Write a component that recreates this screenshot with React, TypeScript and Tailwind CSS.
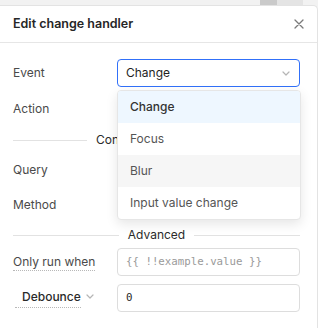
import React from 'react';

const labelCls = 'w-[104px] shrink-0 text-[12px] text-[#4a4a4a]';

const Chevron: React.FC<{ className?: string }> = ({ className }) => (
  <svg width="8" height="5" viewBox="0 0 8 5" className={className} fill="none">
    <path d="M1 1l3 3 3-3" stroke="#b5b5b5" strokeWidth="1.2" strokeLinecap="round" strokeLinejoin="round" />
  </svg>
);

const Divider: React.FC<{ title: string; left?: string }> = ({ title, left }) => (
  <div className="flex items-center h-[18px] gap-[9px]">
    <div className={`h-px bg-[#e2e2e2] ${left ?? 'flex-1'}`} />
    <span className="text-[12px] text-[#2b2b2b] whitespace-nowrap">{title}</span>
    <div className="h-px bg-[#e2e2e2] flex-1" />
  </div>
);

const App: React.FC = () => {
  const options = ['Change', 'Focus', 'Blur', 'Input value change'];

  return (
    <div className="w-[318px] h-[328px] bg-[#f2f2f2] overflow-hidden relative font-['Inter',sans-serif]">
      <div className="h-[5px] flex">
        <div className="w-[260px]" />
        <div className="w-[17px] bg-[#cacaca]" />
        <div className="w-[26px] bg-[#e4e4e4]" />
      </div>

      <div className="bg-white border-t border-r border-[#e3e3e3] rounded-tr-[5px] h-[330px] w-[318px]">
        <div className="h-[37px] border-b border-[#e6e6e6] flex items-center justify-between pl-[13px] pr-[13px]">
          <span className="text-[12.5px] font-semibold text-[#262626]">Edit change handler</span>
          <svg width="10" height="10" viewBox="0 0 10 10" fill="none">
            <path d="M1 1l8 8M9 1L1 9" stroke="#7a7a7a" strokeWidth="1.3" strokeLinecap="round" />
          </svg>
        </div>

        <div className="pl-[13px] pr-[17px] pt-[16px] flex flex-col">
          <div className="flex items-center h-[28px]">
            <span className={labelCls}>Event</span>
            <div className="flex-1 h-[28px] border border-[#3170f9] rounded-[4px] flex items-center justify-between pl-[8px] pr-[9px]">
              <span className="text-[12px] text-[#1f1f1f]">Change</span>
              <Chevron />
            </div>
          </div>

          <div className="flex items-center h-[28px] mt-[8px]">
            <span className={labelCls}>Action</span>
          </div>

          <div className="mt-[8px]">
            <Divider title="Control component" left="w-[74px]" />
          </div>

          <div className="flex items-center h-[28px] mt-[7px]">
            <span className={labelCls}>Query</span>
          </div>

          <div className="flex items-center h-[28px] mt-[7px]">
            <span className={labelCls}>Method</span>
          </div>

          <div className="mt-[7px]">
            <Divider title="Advanced" />
          </div>

          <div className="flex items-center h-[28px] mt-[4px]">
            <div className={labelCls}>
              <span className="border-b border-dotted border-[#b8b8b8] pb-[1px]">Only run when</span>
            </div>
            <div className="flex-1 h-[28px] border border-[#dddddd] rounded-[4px] flex items-center pl-[8px]">
              <span className="text-[10.75px] text-[#9a9a9a] font-['DejaVu_Sans_Mono',monospace]">{'{{ !!example.value }}'}</span>
            </div>
          </div>

          <div className="flex items-center h-[28px] mt-[8px]">
            <div className={`${labelCls} flex items-center`}>
              <span className="ml-[2px] pl-[7px] border-b border-dotted border-[#b8b8b8] pb-[1px] font-medium text-[#2a2a2a]">Debounce</span>
              <Chevron className="ml-[5px] -mt-[4px]" />
            </div>
            <div className="flex-1 h-[28px] border border-[#dddddd] rounded-[4px] flex items-center pl-[8px]">
              <span className="text-[10.75px] text-[#1f1f1f] font-['DejaVu_Sans_Mono',monospace]">0</span>
            </div>
          </div>
        </div>
      </div>

      <div className="absolute left-[117px] top-[90px] w-[184px] bg-white border border-[#e6e6e6] rounded-[4px] shadow-[0_4px_12px_rgba(0,0,0,0.1)] overflow-hidden">
        {options.map((o, i) => (
          <div
            key={o}
            className={`h-[32px] flex items-center pl-[12px] text-[12px] ${
              i === 0 ? 'bg-[#eef7ff] font-medium text-[#333]' : i === 2 ? 'bg-[#f6f6f6] text-[#555]' : 'text-[#555]'
            }`}
          >
            {o}
          </div>
        ))}
      </div>
    </div>
  );
};

export default App;
